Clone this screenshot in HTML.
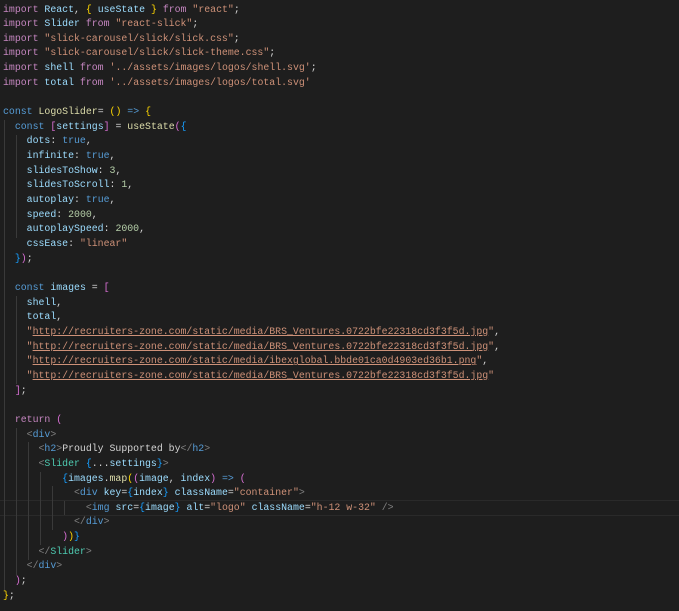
<!DOCTYPE html>
<html><head><meta charset="utf-8"><style>
html,body{margin:0;padding:0;background:#1e1e1e;width:679px;height:611px;overflow:hidden}
pre{margin:0;position:absolute;left:3px;top:2.5px;font-family:"Liberation Mono",monospace;font-size:9.87px;line-height:14.65px;color:#d4d4d4;white-space:pre}
.k{color:#c586c0}.v{color:#9cdcfe}.s{color:#ce9178}.c{color:#569cd6}.f{color:#dcdcaa}.y{color:#ffd700}.p{color:#da70d6}.b{color:#179fff}.n{color:#b5cea8}.t{color:#808080}.g{color:#4ec9b0}
.u{text-decoration:underline}
.hl{position:absolute;left:0;width:679px;top:500px;height:14px;border-top:1px solid #2a2a2a;border-bottom:1px solid #2a2a2a}
.ig{position:absolute;width:1px;background:#3a3a3a}
</style></head><body>
<div class="hl"></div>
<div class="ig" style="left:4px;top:120px;height:471px"></div>
<div class="ig" style="left:16px;top:135px;height:103px"></div>
<div class="ig" style="left:16px;top:296px;height:88px"></div>
<div class="ig" style="left:16px;top:428px;height:147px"></div>
<div class="ig" style="left:28px;top:442px;height:118px"></div>
<div class="ig" style="left:40px;top:472px;height:73px"></div>
<div class="ig" style="left:52px;top:486px;height:44px"></div>
<div class="ig" style="left:64px;top:501px;height:14px"></div>
<pre><span class="k">import</span> <span class="v">React</span>, <span class="y">{</span> <span class="v">useState</span> <span class="y">}</span> <span class="k">from</span> <span class="s">"react"</span>;
<span class="k">import</span> <span class="v">Slider</span> <span class="k">from</span> <span class="s">"react-slick"</span>;
<span class="k">import</span> <span class="s">"slick-carousel/slick/slick.css"</span>;
<span class="k">import</span> <span class="s">"slick-carousel/slick/slick-theme.css"</span>;
<span class="k">import</span> <span class="v">shell</span> <span class="k">from</span> <span class="s">'../assets/images/logos/shell.svg'</span>;
<span class="k">import</span> <span class="v">total</span> <span class="k">from</span> <span class="s">'../assets/images/logos/total.svg'</span>

<span class="c">const</span> <span class="f">LogoSlider</span>= <span class="y">()</span> <span class="c">=&gt;</span> <span class="y">{</span>
  <span class="c">const</span> <span class="p">[</span><span class="v">settings</span><span class="p">]</span> = <span class="f">useState</span><span class="p">(</span><span class="b">{</span>
    <span class="v">dots</span>: <span class="c">true</span>,
    <span class="v">infinite</span>: <span class="c">true</span>,
    <span class="v">slidesToShow</span>: <span class="n">3</span>,
    <span class="v">slidesToScroll</span>: <span class="n">1</span>,
    <span class="v">autoplay</span>: <span class="c">true</span>,
    <span class="v">speed</span>: <span class="n">2000</span>,
    <span class="v">autoplaySpeed</span>: <span class="n">2000</span>,
    <span class="v">cssEase</span>: <span class="s">"linear"</span>
  <span class="b">}</span><span class="p">)</span>;

  <span class="c">const</span> <span class="v">images</span> = <span class="p">[</span>
    <span class="v">shell</span>,
    <span class="v">total</span>,
    <span class="s">"<span class="u">http://recruiters-zone.com/static/media/BRS_Ventures.0722bfe22318cd3f3f5d.jpg</span>"</span>,
    <span class="s">"<span class="u">http://recruiters-zone.com/static/media/BRS_Ventures.0722bfe22318cd3f3f5d.jpg</span>"</span>,
    <span class="s">"<span class="u">http://recruiters-zone.com/static/media/ibexglobal.bbde01ca0d4903ed36b1.png</span>"</span>,
    <span class="s">"<span class="u">http://recruiters-zone.com/static/media/BRS_Ventures.0722bfe22318cd3f3f5d.jpg</span>"</span>
  <span class="p">]</span>;

  <span class="k">return</span> <span class="p">(</span>
    <span class="t">&lt;</span><span class="c">div</span><span class="t">&gt;</span>
      <span class="t">&lt;</span><span class="c">h2</span><span class="t">&gt;</span>Proudly Supported by<span class="t">&lt;/</span><span class="c">h2</span><span class="t">&gt;</span>
      <span class="t">&lt;</span><span class="g">Slider</span> <span class="b">{</span>...<span class="v">settings</span><span class="b">}</span><span class="t">&gt;</span>
          <span class="b">{</span><span class="v">images</span>.<span class="f">map</span><span class="y">(</span><span class="p">(</span><span class="v">image</span>, <span class="v">index</span><span class="p">)</span> <span class="c">=&gt;</span> <span class="p">(</span>
            <span class="t">&lt;</span><span class="c">div</span> <span class="v">key</span>=<span class="b">{</span><span class="v">index</span><span class="b">}</span> <span class="v">className</span>=<span class="s">"container"</span><span class="t">&gt;</span>
              <span class="t">&lt;</span><span class="c">img</span> <span class="v">src</span>=<span class="b">{</span><span class="v">image</span><span class="b">}</span> <span class="v">alt</span>=<span class="s">"logo"</span> <span class="v">className</span>=<span class="s">"h-12 w-32"</span> <span class="t">/&gt;</span>
            <span class="t">&lt;/</span><span class="c">div</span><span class="t">&gt;</span>
          <span class="p">)</span><span class="y">)</span><span class="b">}</span>
      <span class="t">&lt;/</span><span class="g">Slider</span><span class="t">&gt;</span>
    <span class="t">&lt;/</span><span class="c">div</span><span class="t">&gt;</span>
  <span class="p">)</span>;
<span class="y">}</span>;</pre>
</body></html>
